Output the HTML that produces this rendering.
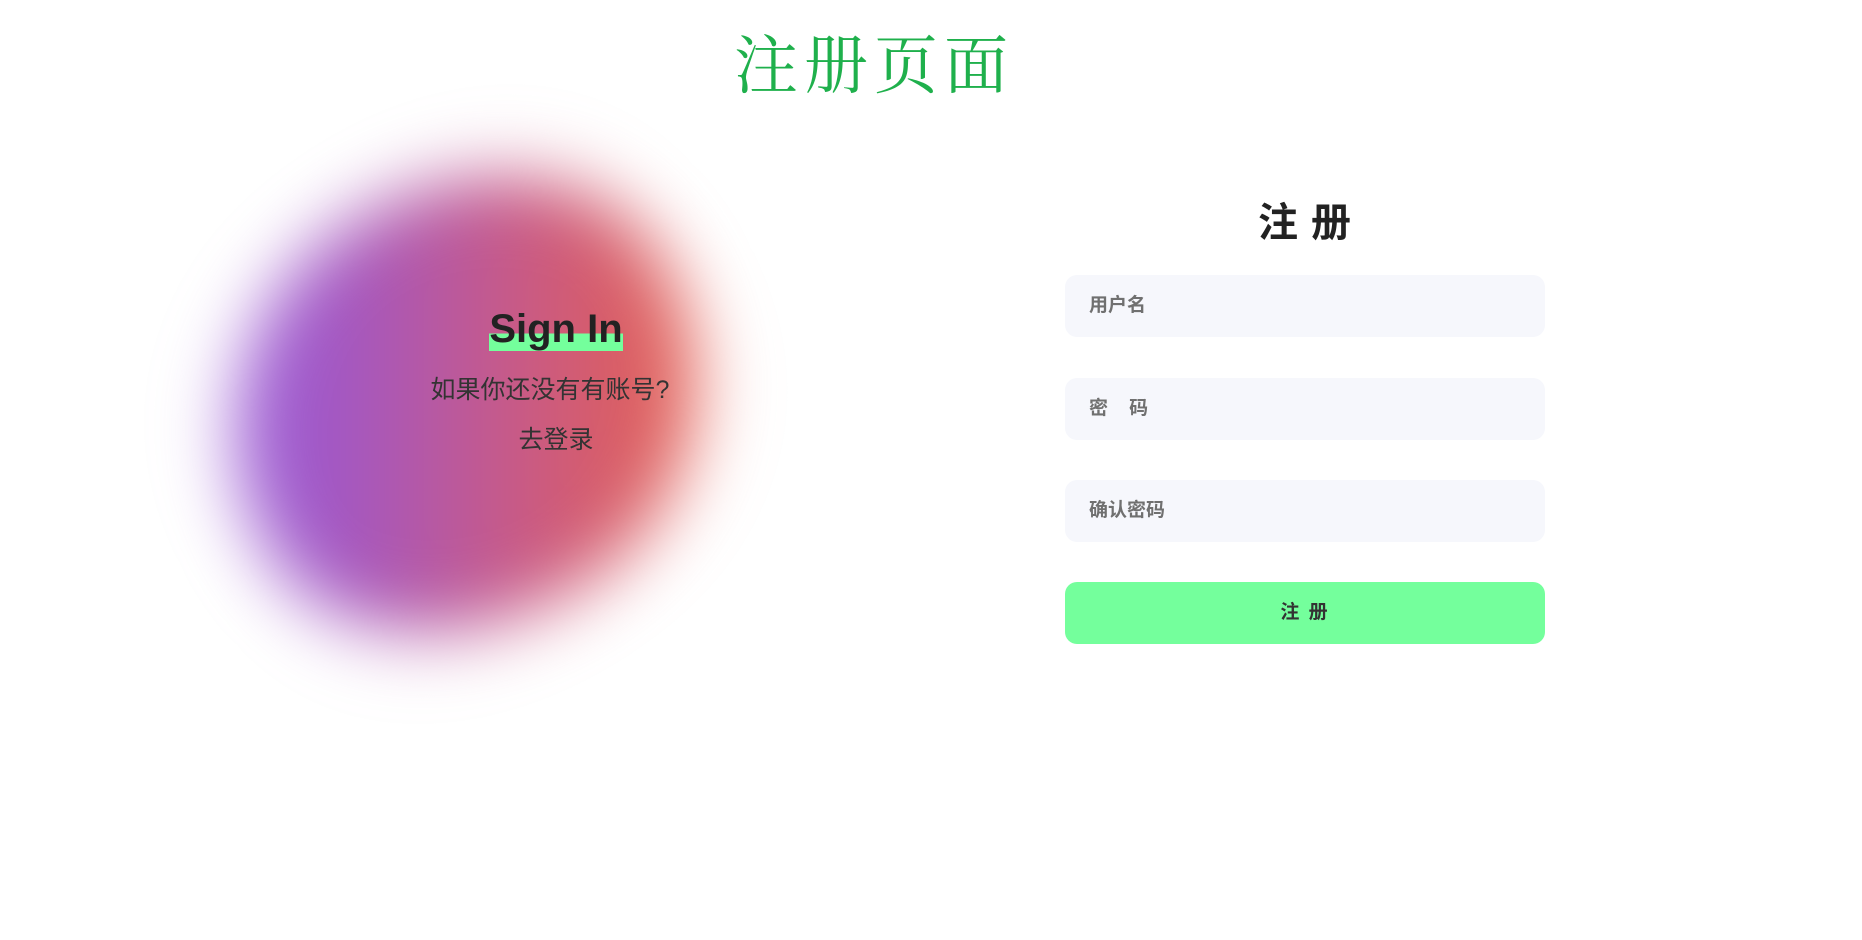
<!DOCTYPE html>
<html><head><meta charset="utf-8"><style>
html,body{margin:0;padding:0;width:1862px;height:940px;background:#fff;overflow:hidden;font-family:"Liberation Sans","Noto Sans CJK SC",sans-serif;}
.t{position:absolute;left:0;width:1748px;top:15px;text-align:center;font-family:"Liberation Serif","Noto Serif CJK SC",serif;font-size:64px;color:#1fb04c;letter-spacing:6px;}
.blob{position:absolute;left:220px;top:190px;width:490px;height:430px;border-radius:50% 50% 48% 52%/55% 45% 55% 45%;transform:rotate(-35deg);filter:blur(36px);background:linear-gradient(125deg,#9466ec 0%,#a257c4 30%,#c85a86 58%,#e5604f 85%,#ee6a4e 100%);}
.si{position:absolute;left:456px;width:200px;top:307px;text-align:center;font-size:40px;font-weight:bold;color:#222;}
.si span{background:linear-gradient(transparent 60%,#74ff9c 60%);}
.p{position:absolute;left:395px;width:310px;text-align:center;font-size:25px;color:#333;}
.h{position:absolute;left:1065px;width:480px;top:190px;text-align:center;font-size:40px;font-weight:bold;color:#222;letter-spacing:1px;}
.in{position:absolute;left:1065px;width:480px;height:62px;border-radius:12px;background:#f6f7fc;box-sizing:border-box;padding-left:24px;line-height:62px;font-size:19px;font-weight:bold;color:#707070;}
.btn{position:absolute;left:1065px;width:480px;height:62px;top:582px;border-radius:12px;background:#74ff9c;text-align:center;line-height:62px;font-size:19px;font-weight:bold;color:#333;letter-spacing:2px;}
</style></head><body>
<div class="t">注册页面</div>
<div class="blob"></div>
<div class="si"><span>Sign In</span></div>
<div class="p" style="top:370px">如果你还没有有账号?</div>
<div class="p" style="top:420px;left:401px">去登录</div>
<div class="h">注 册</div>
<div class="in" style="top:275px">用户名</div>
<div class="in" style="top:378px">密&nbsp;&nbsp;&nbsp;&nbsp;码</div>
<div class="in" style="top:480px">确认密码</div>
<div class="btn">注 册</div>
</body></html>
